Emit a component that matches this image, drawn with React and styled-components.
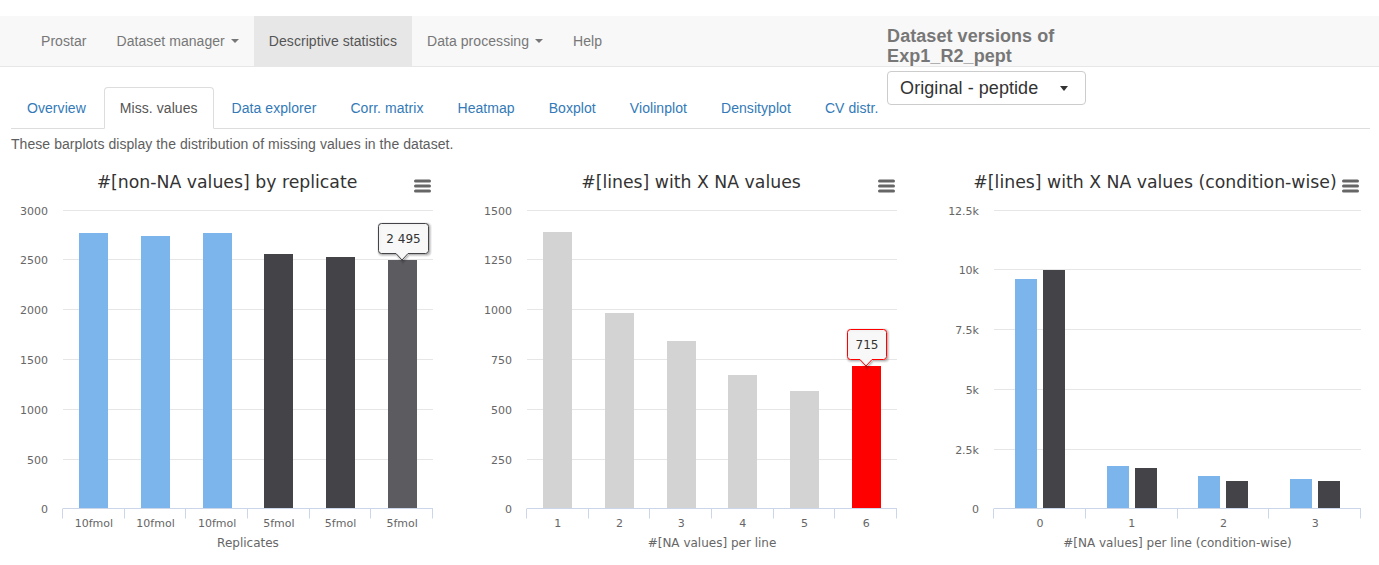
import React from 'react';
import styled, { createGlobalStyle } from 'styled-components';

const GlobalStyle = createGlobalStyle`
  html, body { margin: 0; padding: 0; background: #fff; }
  body {
    font-family: "Liberation Sans", Arial, sans-serif;
    font-size: 14px;
    letter-spacing: 0.06px;
    color: #333;
  }
  * { box-sizing: border-box; }
`;

const Page = styled.div`
  padding-top: 16px;
`;

const Navbar = styled.nav`
  position: relative;
  z-index: 2;
  display: flex;
  align-items: flex-start;
  height: 51px;
  padding-left: 26px;
  background: #f8f8f8;
  border-bottom: 1px solid #e7e7e7;
  margin-bottom: 20px;
`;

const NavItem = styled.a`
  display: flex;
  align-items: center;
  height: 50px;
  padding: 0 15px;
  font-size: 14px;
  text-decoration: none;
  white-space: nowrap;
  color: ${(p) => (p.$active ? '#555' : '#777')};
  background: ${(p) => (p.$active ? '#e7e7e7' : 'transparent')};
`;

const Caret = styled.span`
  display: inline-block;
  margin-left: 6px;
  width: 0;
  height: 0;
  border-top: 4px solid ${(p) => p.$color || '#777'};
  border-left: 4px solid transparent;
  border-right: 4px solid transparent;
`;

const VersionPanel = styled.div`
  margin-left: 270px;
  padding-top: 10px;
  display: flex;
  flex-direction: column;
`;

const VersionTitle = styled.div`
  font-size: 18px;
  font-weight: bold;
  line-height: 20px;
  color: #777;
`;

const SelectBox = styled.div`
  margin-top: 5px;
  width: 199px;
  height: 34px;
  display: flex;
  align-items: center;
  justify-content: space-between;
  padding: 0 17px 0 12px;
  background: #fff;
  border: 1px solid #ccc;
  border-radius: 4px;
  font-size: 18px;
  color: #333;
`;

const SelectCaret = styled.span`
  width: 0;
  height: 0;
  border-top: 5px solid #333;
  border-left: 4.5px solid transparent;
  border-right: 4.5px solid transparent;
`;

const Content = styled.div`
  padding: 0 9px 0 11px;
`;

const TabList = styled.ul`
  display: flex;
  margin: 0;
  padding: 0;
  list-style: none;
  border-bottom: 1px solid #ddd;
`;

const Tab = styled.li`
  margin-right: 2px;
  margin-bottom: -1px;
  padding: 10px 15px;
  line-height: 20px;
  font-size: 14px;
  border: 1px solid ${(p) => (p.$active ? '#ddd' : 'transparent')};
  border-bottom-color: transparent;
  border-radius: 4px 4px 0 0;
  background: ${(p) => (p.$active ? '#fff' : 'transparent')};
  color: ${(p) => (p.$active ? '#555' : '#337ab7')};
  white-space: nowrap;
`;

const Description = styled.p`
  margin: 5px 0 0;
  line-height: 20px;
  font-size: 14px;
  color: #5e5e5e;
`;

const ChartsRow = styled.div`
  display: flex;
  gap: 32px;
  margin-top: 6px;
  letter-spacing: normal;
`;

const ChartCard = styled.div`
  position: relative;
  flex-shrink: 0;
  width: 432px;
`;

const ChartTitle = styled.div`
  height: 44px;
  line-height: 44px;
  text-align: center;
  font-family: "DejaVu Sans", sans-serif;
  font-size: 17.3px;
  color: #333;
  white-space: nowrap;
`;

const MenuButton = styled.svg`
  position: absolute;
  top: 19px;
  right: 12px;
  width: 17px;
  height: 14px;
`;

const ChartSvg = styled.svg`
  display: block;
  width: 432px;
  height: 356px;
  font-family: "DejaVu Sans", sans-serif;
`;

const BLUE = '#7cb5ec';
const DARK = '#434348';
const HOVER_DARK = '#5b5b60';
const GREY = '#d3d3d3';
const RED = '#ff0000';

const crisp = (v) => Math.round(v) + 0.5;

function Tooltip({ x, y, w, h, tipX, tipY, color, text }) {
  const r = 3;
  const x1 = x + w;
  const y1 = y + h;
  const d = `M ${x + r} ${y} H ${x1 - r} Q ${x1} ${y} ${x1} ${y + r} V ${y1 - r} Q ${x1} ${y1} ${x1 - r} ${y1} H ${tipX + 6} L ${tipX} ${tipY} L ${tipX - 6} ${y1} H ${x + r} Q ${x} ${y1} ${x} ${y1 - r} V ${y + r} Q ${x} ${y} ${x + r} ${y} Z`;
  return (
    <g>
      <g transform="translate(1,1)" fill="none" stroke="#000">
        <path d={d} strokeOpacity="0.05" strokeWidth="5" />
        <path d={d} strokeOpacity="0.1" strokeWidth="3" />
        <path d={d} strokeOpacity="0.15" strokeWidth="1" />
      </g>
      <path d={d} fill="rgba(247,247,247,0.92)" stroke={color} strokeWidth="1" />
      <text x={x + w / 2} y={y + h / 2 + 4.5} textAnchor="middle" fontSize="12" fill="#333">
        {text}
      </text>
    </g>
  );
}

function BarChart({ cfg }) {
  const {
    title,
    plotLeft,
    plotRight = 422,
    plotTop = 5.5,
    plotBottom = 304.5,
    yMax,
    yTicks,
    fmt = (v) => String(v),
    categories,
    groups,
    barWidth,
    barGap = 0,
    xTitle,
    tooltip,
  } = cfg;
  const cw = (plotRight - plotLeft) / categories.length;
  const yOf = (v) => plotBottom - (v / yMax) * (plotBottom - plotTop);
  const center = (plotLeft + plotRight) / 2;

  return (
    <ChartCard>
      <ChartTitle>{title}</ChartTitle>
      <MenuButton viewBox="0 0 17 14">
        <g stroke="#666" strokeWidth="3" strokeLinecap="round">
          <line x1="1.5" y1="2" x2="15.5" y2="2" />
          <line x1="1.5" y1="7" x2="15.5" y2="7" />
          <line x1="1.5" y1="12" x2="15.5" y2="12" />
        </g>
      </MenuButton>
      <ChartSvg viewBox="0 0 432 356">
        {yTicks.map((t) => {
          const y = t === 0 ? plotBottom : crisp(yOf(t));
          return (
            <g key={t}>
              {t !== 0 && (
                <line x1={plotLeft} x2={plotRight} y1={y} y2={y} stroke="#e6e6e6" strokeWidth="1" />
              )}
              <text x={plotLeft - 15} y={y + 4} textAnchor="end" fontSize="11" fill="#666">
                {fmt(t)}
              </text>
            </g>
          );
        })}

        {groups.map((group, i) => {
          const total = group.length * barWidth + (group.length - 1) * barGap;
          const start = plotLeft + i * cw + (cw - total) / 2;
          return group.map((b, j) => {
            const bx = Math.round(start + j * (barWidth + barGap));
            const top = Math.round(yOf(b.v));
            return (
              <rect
                key={`${i}-${j}`}
                x={bx}
                y={top}
                width={barWidth}
                height={Math.round(plotBottom) - top}
                fill={b.c}
              />
            );
          });
        })}

        <line x1={plotLeft} x2={plotRight} y1={plotBottom} y2={plotBottom} stroke="#ccd6eb" strokeWidth="1" />
        {Array.from({ length: categories.length + 1 }, (_, i) => {
          const x = crisp(plotLeft + i * cw) - 1;
          return (
            <line key={i} x1={x} x2={x} y1={plotBottom} y2={plotBottom + 10} stroke="#ccd6eb" strokeWidth="1" />
          );
        })}
        {categories.map((c, i) => (
          <text
            key={i}
            x={plotLeft + (i + 0.5) * cw}
            y={plotBottom + 18.5}
            textAnchor="middle"
            fontSize="11"
            fill="#666"
          >
            {c}
          </text>
        ))}
        <text x={center} y={plotBottom + 38} textAnchor="middle" fontSize="12" fill="#666">
          {xTitle}
        </text>

        {tooltip && <Tooltip {...tooltip} />}
      </ChartSvg>
    </ChartCard>
  );
}

const chart1 = {
  title: '#[non-NA values] by replicate',
  plotLeft: 52,
  yMax: 3000,
  yTicks: [0, 500, 1000, 1500, 2000, 2500, 3000],
  categories: ['10fmol', '10fmol', '10fmol', '5fmol', '5fmol', '5fmol'],
  groups: [
    [{ v: 2760, c: BLUE }],
    [{ v: 2730, c: BLUE }],
    [{ v: 2760, c: BLUE }],
    [{ v: 2550, c: DARK }],
    [{ v: 2528, c: DARK }],
    [{ v: 2495, c: HOVER_DARK }],
  ],
  barWidth: 29,
  xTitle: 'Replicates',
  tooltip: { x: 367.5, y: 19.5, w: 50, h: 30, tipX: 391, tipY: 56, color: DARK, text: '2 495' },
};

const chart2 = {
  title: '#[lines] with X NA values',
  plotLeft: 52,
  yMax: 1500,
  yTicks: [0, 250, 500, 750, 1000, 1250, 1500],
  categories: ['1', '2', '3', '4', '5', '6'],
  groups: [
    [{ v: 1386, c: GREY }],
    [{ v: 983, c: GREY }],
    [{ v: 838, c: GREY }],
    [{ v: 672, c: GREY }],
    [{ v: 588, c: GREY }],
    [{ v: 715, c: RED }],
  ],
  barWidth: 29,
  xTitle: '#[NA values] per line',
  tooltip: { x: 372.5, y: 125.5, w: 39, h: 30, tipX: 391, tipY: 162, color: RED, text: '715' },
};

const chart3 = {
  title: '#[lines] with X NA values (condition-wise)',
  plotLeft: 55,
  yMax: 12500,
  yTicks: [0, 2500, 5000, 7500, 10000, 12500],
  fmt: (v) => (v === 0 ? '0' : `${v / 1000}k`),
  categories: ['0', '1', '2', '3'],
  groups: [
    [{ v: 9615, c: BLUE }, { v: 9960, c: DARK }],
    [{ v: 1756, c: BLUE }, { v: 1714, c: DARK }],
    [{ v: 1350, c: BLUE }, { v: 1170, c: DARK }],
    [{ v: 1254, c: BLUE }, { v: 1170, c: DARK }],
  ],
  barWidth: 22,
  barGap: 6,
  xTitle: '#[NA values] per line (condition-wise)',
};

const navItems = [
  { label: 'Prostar' },
  { label: 'Dataset manager', dropdown: true },
  { label: 'Descriptive statistics', active: true },
  { label: 'Data processing', dropdown: true },
  { label: 'Help' },
];

const tabs = [
  'Overview',
  'Miss. values',
  'Data explorer',
  'Corr. matrix',
  'Heatmap',
  'Boxplot',
  'Violinplot',
  'Densityplot',
  'CV distr.',
];

export default function App() {
  return (
    <Page>
      <GlobalStyle />
      <Navbar>
        {navItems.map((item) => (
          <NavItem key={item.label} $active={item.active}>
            {item.label}
            {item.dropdown && <Caret />}
          </NavItem>
        ))}
        <VersionPanel>
          <VersionTitle>
            Dataset versions of
            <br />
            Exp1_R2_pept
          </VersionTitle>
          <SelectBox>
            <span>Original - peptide</span>
            <SelectCaret />
          </SelectBox>
        </VersionPanel>
      </Navbar>
      <Content>
        <TabList>
          {tabs.map((t) => (
            <Tab key={t} $active={t === 'Miss. values'}>
              {t}
            </Tab>
          ))}
        </TabList>
        <Description>These barplots display the distribution of missing values in the dataset.</Description>
        <ChartsRow>
          <BarChart cfg={chart1} />
          <BarChart cfg={chart2} />
          <BarChart cfg={chart3} />
        </ChartsRow>
      </Content>
    </Page>
  );
}
